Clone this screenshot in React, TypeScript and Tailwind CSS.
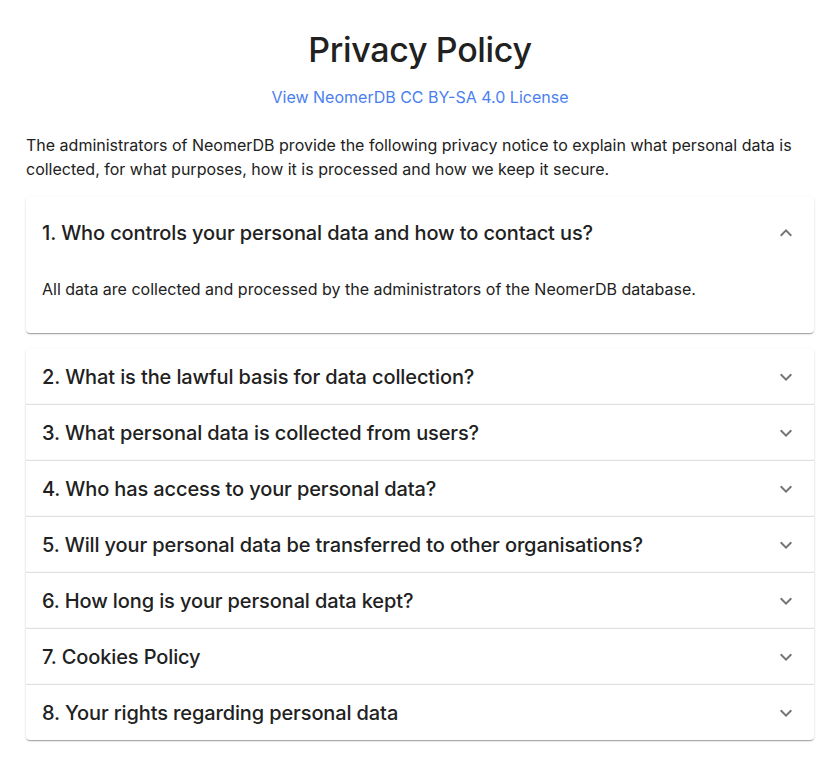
import React, { useState } from 'react';

const sections = [
  {
    title: '1. Who controls your personal data and how to contact us?',
    body: 'All data are collected and processed by the administrators of the NeomerDB database.',
  },
  { title: '2. What is the lawful basis for data collection?', body: '' },
  { title: '3. What personal data is collected from users?', body: '' },
  { title: '4. Who has access to your personal data?', body: '' },
  { title: '5. Will your personal data be transferred to other organisations?', body: '' },
  { title: '6. How long is your personal data kept?', body: '' },
  { title: '7. Cookies Policy', body: '' },
  { title: '8. Your rights regarding personal data', body: '' },
];

const Chevron = ({ open }: { open: boolean }) => (
  <svg viewBox="0 0 24 24" className={`w-6 h-6 fill-[#757575] ${open ? 'rotate-180' : ''}`}>
    <path d="M16.59 8.59 12 13.17 7.41 8.59 6 10l6 6 6-6z" />
  </svg>
);

const App = () => {
  const [open, setOpen] = useState<number | null>(0);
  const cardShadow = 'shadow-[0_2px_1px_-1px_rgba(0,0,0,0.2),0_1px_1px_0_rgba(0,0,0,0.14),0_1px_3px_0_rgba(0,0,0,0.12)]';

  return (
    <div className="min-h-screen bg-white text-[#212121] font-['Inter',sans-serif] pl-[26px] pr-[22px] pt-[29px] pb-6">
      <h1 className="text-center text-[34px] leading-[42px] font-medium tracking-[-0.32px]">Privacy Policy</h1>
      <div className="mt-[14px] text-center">
        <a href="#" className="text-[16px] leading-6 text-[#4a7ff0]">View NeomerDB CC BY-SA 4.0 License</a>
      </div>
      <p className="mt-6 text-[16px] leading-6">
        The administrators of NeomerDB provide the following privacy notice to explain what personal data is collected, for what purposes, how it is processed and how we keep it secure.
      </p>

      <div className="mt-4">
        {sections.map((s, i) => {
          const isOpen = open === i;
          const prevOpen = open === i - 1;
          const nextOpen = open === i + 1;
          const first = i === 0 || prevOpen;
          const last = i === sections.length - 1 || nextOpen;
          return (
            <div
              key={i}
              className={`bg-white ${cardShadow} ${isOpen ? 'rounded my-4 first:mt-0' : ''} ${first ? 'rounded-t' : ''} ${last ? 'rounded-b' : ''} ${!first && !isOpen ? 'border-t border-[#e0e0e0]' : ''}`}
            >
              <button
                onClick={() => setOpen(isOpen ? null : i)}
                className={`w-full flex items-center justify-between px-4 text-left ${isOpen ? 'h-[72px]' : 'h-[55px]'}`}
              >
                <span className="text-[20px] leading-8 font-medium tracking-[-0.12px]">{s.title}</span>
                <Chevron open={isOpen} />
              </button>
              {isOpen && (
                <div className="px-4 pt-2 pb-8 text-[16px] leading-6">
                  {s.body || 'Details for this section are available on request.'}
                </div>
              )}
            </div>
          );
        })}
      </div>
    </div>
  );
};

export default App;
